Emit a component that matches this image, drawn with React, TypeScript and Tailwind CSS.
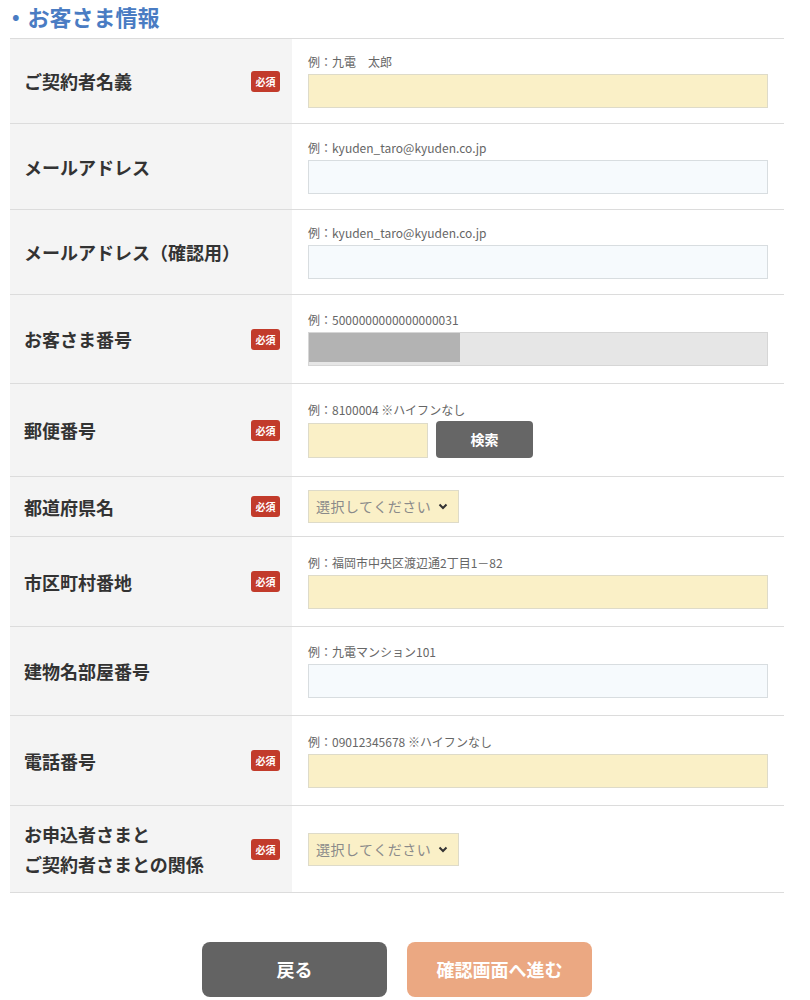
import React from "react";

const font = { fontFamily: '"Noto Sans CJK JP", "Noto Sans", sans-serif' };

type Field = {
  label: React.ReactNode;
  required?: boolean;
  h: string;
  kind: "yellow" | "blue" | "gray" | "zip" | "select";
  hint?: string;
};

const fields: Field[] = [
  { label: "ご契約者名義", required: true, h: "h-[85px]", kind: "yellow", hint: "例：九電　太郎" },
  { label: "メールアドレス", h: "h-[86px]", kind: "blue", hint: "例：kyuden_taro@kyuden.co.jp" },
  { label: "メールアドレス（確認用）", h: "h-[85px]", kind: "blue", hint: "例：kyuden_taro@kyuden.co.jp" },
  { label: "お客さま番号", required: true, h: "h-[89px]", kind: "gray", hint: "例：5000000000000000031" },
  { label: "郵便番号", required: true, h: "h-[93px]", kind: "zip", hint: "例：8100004 ※ハイフンなし" },
  { label: "都道府県名", required: true, h: "h-[60px]", kind: "select" },
  { label: "市区町村番地", required: true, h: "h-[90px]", kind: "yellow", hint: "例：福岡市中央区渡辺通2丁目1－82" },
  { label: "建物名部屋番号", h: "h-[89px]", kind: "blue", hint: "例：九電マンション101" },
  { label: "電話番号", required: true, h: "h-[90px]", kind: "yellow", hint: "例：09012345678 ※ハイフンなし" },
  {
    label: (
      <>
        お申込者さまと
        <br />
        ご契約者さまとの関係
      </>
    ),
    required: true,
    h: "h-[87px]",
    kind: "select",
  },
];

const Select = () => (
  <div className="w-[151px] h-[33px] bg-[#faf0c7] border border-[#dedbc9] flex items-center justify-between pl-[7px] pr-[10px]">
    <span className="text-[14px] text-[#8a8a8a] tracking-[0.5px]">選択してください</span>
    <svg width="10" height="7" viewBox="0 0 10 7">
      <path d="M1.5 1.5 L5 5 L8.5 1.5" stroke="#333" strokeWidth="2" fill="none" />
    </svg>
  </div>
);

const Control = ({ f }: { f: Field }) => {
  if (f.kind === "select") return <Select />;
  return (
    <div className="flex flex-col">
      <p className="text-[12px] leading-[16px] text-[#666] mb-[4px]">{f.hint}</p>
      {f.kind === "yellow" && <div className="h-[34px] bg-[#faf0c7] border border-[#dedbc9]" />}
      {f.kind === "blue" && <div className="h-[34px] bg-[#f6fafd] border border-[#d8dde0]" />}
      {f.kind === "gray" && (
        <div className="h-[34px] bg-[#e6e6e6] border border-[#d6d6d6]">
          <div className="w-[151px] h-[29px] bg-[#b3b3b3]" />
        </div>
      )}
      {f.kind === "zip" && (
        <div className="flex items-center gap-[8px] pt-[1px]">
          <div className="w-[120px] h-[35px] bg-[#faf0c7] border border-[#dedbc9]" />
          <button className="w-[97px] h-[37px] -mt-[2px] rounded-[4px] bg-[#666] text-white text-[14px] font-bold">
            検索
          </button>
        </div>
      )}
    </div>
  );
};

export default function App() {
  return (
    <div className="bg-white w-[810px] h-[1000px] overflow-hidden" style={font}>
      <div className="w-[774px] ml-[10px]">
        <h2 className="flex items-center h-[32px] text-[22px] font-bold text-[#4a7cc3] leading-[32px]">
          <span className="text-[20px] mr-[8px] ml-[2px]">•</span>
          お客さま情報
        </h2>
        <div className="mt-[6px] border-t border-[#dcdcdc]">
          {fields.map((f, i) => (
            <div key={i} className={`flex border-b border-[#dcdcdc] ${f.h}`}>
              <div className="w-[282px] bg-[#f4f4f4] flex items-center justify-between pl-[14px] pr-[12px]">
                <span className="text-[18px] leading-[30px] font-bold text-[#333]">{f.label}</span>
                {f.required && (
                  <span className="w-[29px] h-[21px] rounded-[3px] bg-[#c23b2b] text-white text-[10px] font-bold flex items-center justify-center">
                    必須
                  </span>
                )}
              </div>
              <div className="flex-1 flex flex-col justify-center pl-[16px] pr-[16px]">
                <Control f={f} />
              </div>
            </div>
          ))}
        </div>
        <div className="flex justify-center gap-[20px] mt-[49px]">
          <button className="w-[185px] h-[55px] rounded-[8px] bg-[#636363] text-white text-[18px] font-bold">戻る</button>
          <button className="w-[185px] h-[55px] rounded-[8px] bg-[#eba882] text-white text-[18px] font-bold">確認画面へ進む</button>
        </div>
      </div>
    </div>
  );
}
